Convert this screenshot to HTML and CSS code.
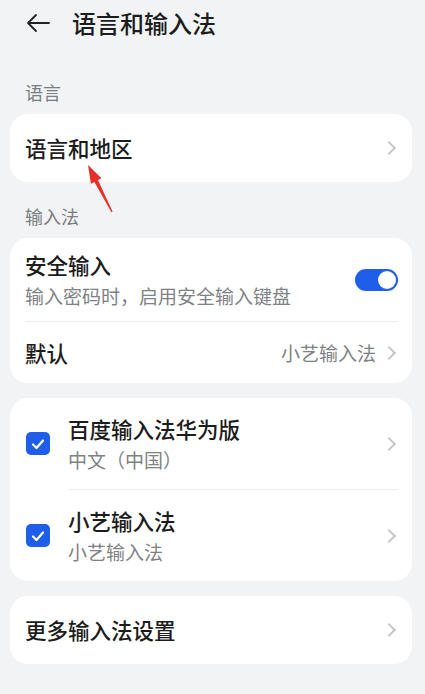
FILE: index.html
```html
<!DOCTYPE html>
<html lang="zh-CN">
<head>
    <meta charset="UTF-8">
    <meta name="viewport" content="width=device-width, initial-scale=1.0">
    <title>语言和输入法</title>
    <link rel="stylesheet" href="styles.css">
</head>
<body>
    <div class="page">
        <div class="header">
            <svg class="back" width="24" height="20" viewBox="0 0 24 20">
                <path d="M23 10H2M10 2L2 10l8 8" fill="none" stroke="#222" stroke-width="1.8" stroke-linecap="round" stroke-linejoin="round"/>
            </svg>
            <h1>语言和输入法</h1>
        </div>

        <div class="section-label">语言</div>
        <div class="card">
            <div class="row row-single">
                <span class="row-title">语言和地区</span>
                <span class="chevron"></span>
            </div>
        </div>

        <div class="section-label">输入法</div>
        <div class="card">
            <div class="row row-double">
                <div class="row-text">
                    <span class="row-title">安全输入</span>
                    <span class="row-sub">输入密码时，启用安全输入键盘</span>
                </div>
                <span class="toggle"><span class="knob"></span></span>
            </div>
            <div class="divider"></div>
            <div class="row row-short">
                <span class="row-title">默认</span>
                <span class="row-value">小艺输入法</span>
                <span class="chevron"></span>
            </div>
        </div>

        <div class="card card-spaced">
            <div class="row row-check">
                <span class="checkbox"><svg width="14" height="12" viewBox="0 0 14 12"><path d="M2 6.5l3.5 3.5L12 2.5" fill="none" stroke="#fff" stroke-width="2.2" stroke-linecap="round" stroke-linejoin="round"/></svg></span>
                <div class="row-text">
                    <span class="row-title">百度输入法华为版</span>
                    <span class="row-sub">中文（中国）</span>
                </div>
                <span class="chevron"></span>
            </div>
            <div class="divider divider-indent"></div>
            <div class="row row-check">
                <span class="checkbox"><svg width="14" height="12" viewBox="0 0 14 12"><path d="M2 6.5l3.5 3.5L12 2.5" fill="none" stroke="#fff" stroke-width="2.2" stroke-linecap="round" stroke-linejoin="round"/></svg></span>
                <div class="row-text">
                    <span class="row-title">小艺输入法</span>
                    <span class="row-sub">小艺输入法</span>
                </div>
                <span class="chevron"></span>
            </div>
        </div>

        <div class="card card-spaced">
            <div class="row row-single">
                <span class="row-title">更多输入法设置</span>
                <span class="chevron"></span>
            </div>
        </div>

        <!-- 红色标注箭头 -->
        <svg class="pointer" width="425" height="694" viewBox="0 0 425 694">
            <polygon points="88,165 101.5,178.3 98,180.1 112.6,211.8 111.4,212.2 94.4,181.9 90.9,183.7" fill="#e8302a"/>
        </svg>
    </div>
</body>
</html>
```

FILE: styles.css
```css
body {
    margin: 0;
    background-color: #f1f3f4;
    font-family: "Noto Sans CJK SC", "Noto Sans", sans-serif;
    color: #1c1c1c;
}

.page {
    position: relative;
    padding: 0 13px 40px 10px;
    height: 694px;
    box-sizing: border-box;
    overflow: hidden;
}

.header {
    display: flex;
    align-items: center;
    height: 46px;
    padding: 0 0 12px 16px;
}

.header .back {
    margin-right: 22px;
}

.header h1 {
    margin: 0;
    font-size: 24px;
    font-weight: 500;
    line-height: 1;
}

.section-label {
    margin-top: 23px;
    margin-bottom: 11px;
    padding-left: 15px;
    height: 22px;
    line-height: 22px;
    font-size: 18px;
    color: #7b7e81;
}

.card {
    background-color: #fff;
    border-radius: 18px;
}

.card-spaced {
    margin-top: 15px;
}

.row {
    display: flex;
    align-items: center;
    padding: 0 15px;
}

.row-single {
    height: 68px;
}

.row-double {
    height: 83px;
}

.row-short {
    height: 61px;
}

.row-check {
    height: 91px;
    padding-left: 16px;
}

.row-text {
    flex: 1;
    display: flex;
    flex-direction: column;
}

.row-title {
    flex: 1;
    font-size: 21.5px;
    font-weight: 500;
    line-height: 28px;
}

.row-sub {
    font-size: 19px;
    line-height: 26px;
    margin-top: 4px;
    color: #7f8285;
}

.row-value {
    font-size: 19px;
    color: #7f8285;
    margin-right: 8px;
}

.chevron {
    width: 8px;
    height: 8px;
    border-top: 2px solid #c4c6c8;
    border-right: 2px solid #c4c6c8;
    transform: rotate(45deg);
    margin-right: 3px;
}

.divider {
    height: 1px;
    background-color: #ececec;
    margin: 0 14px 0 15px;
}

.divider-indent {
    margin-left: 58px;
}

.toggle {
    width: 43px;
    height: 22px;
    border-radius: 11px;
    background-color: #1f5ee8;
    display: flex;
    align-items: center;
    justify-content: flex-end;
    padding: 0 2px;
    box-sizing: border-box;
    margin-right: -1px;
}

.knob {
    width: 18px;
    height: 18px;
    border-radius: 50%;
    background-color: #fff;
}

.checkbox {
    width: 24px;
    height: 23px;
    border-radius: 5px;
    background-color: #1f5ee8;
    display: flex;
    align-items: center;
    justify-content: center;
    margin-right: 18px;
}

.pointer {
    position: absolute;
    top: 0;
    left: 0;
    pointer-events: none;
}
```
